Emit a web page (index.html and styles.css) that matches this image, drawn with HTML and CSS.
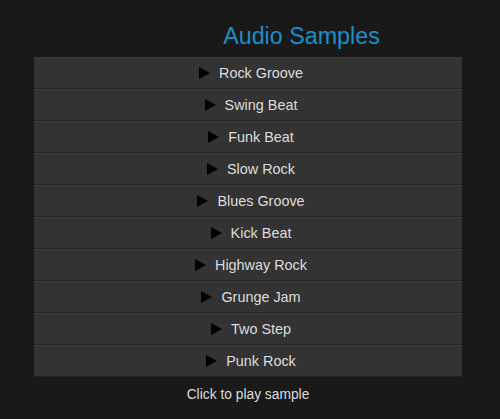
FILE: index.html
```html
<!DOCTYPE html>
<html>
<head>
<meta charset="utf-8">
<link rel="stylesheet" href="styles.css">
</head>
<body>
<div class="wrap">
  <h1 class="title">Audio Samples</h1>
  <ul class="list">
    <li class="row"><svg class="play" viewBox="0 0 11 12"><path d="M0 0L11 6L0 12Z"/></svg><span>Rock Groove</span></li>
    <li class="row"><svg class="play" viewBox="0 0 11 12"><path d="M0 0L11 6L0 12Z"/></svg><span>Swing Beat</span></li>
    <li class="row"><svg class="play" viewBox="0 0 11 12"><path d="M0 0L11 6L0 12Z"/></svg><span>Funk Beat</span></li>
    <li class="row"><svg class="play" viewBox="0 0 11 12"><path d="M0 0L11 6L0 12Z"/></svg><span>Slow Rock</span></li>
    <li class="row"><svg class="play" viewBox="0 0 11 12"><path d="M0 0L11 6L0 12Z"/></svg><span>Blues Groove</span></li>
    <li class="row"><svg class="play" viewBox="0 0 11 12"><path d="M0 0L11 6L0 12Z"/></svg><span>Kick Beat</span></li>
    <li class="row"><svg class="play" viewBox="0 0 11 12"><path d="M0 0L11 6L0 12Z"/></svg><span>Highway Rock</span></li>
    <li class="row"><svg class="play" viewBox="0 0 11 12"><path d="M0 0L11 6L0 12Z"/></svg><span>Grunge Jam</span></li>
    <li class="row"><svg class="play" viewBox="0 0 11 12"><path d="M0 0L11 6L0 12Z"/></svg><span>Two Step</span></li>
    <li class="row"><svg class="play" viewBox="0 0 11 12"><path d="M0 0L11 6L0 12Z"/></svg><span>Punk Rock</span></li>
  </ul>
  <p class="hint">Click to play sample</p>
</div>
</body>
</html>
```
FILE: styles.css
```css
html, body {
  margin: 0;
  padding: 0;
  background: #191919;
  height: 100%;
}
body {
  font-family: "Liberation Sans", Arial, sans-serif;
}
.wrap {
  width: 428px;
  margin: 0 0 0 34px;
  padding-top: 21px;
}
.title {
  margin: 0 0 6px 0;
  padding-left: 107px;
  text-align: center;
  font-weight: normal;
  font-size: 23.3px;
  line-height: 30px;
  color: #1b8fcb;
}
.list {
  list-style: none;
  margin: 0;
  padding: 0;
}
.row {
  display: flex;
  align-items: center;
  justify-content: center;
  height: 30px;
  padding-left: 6px;
  background: #333333;
  border-top: 1px solid #3a3a3a;
  border-bottom: 1px solid #222222;
  color: #dddddd;
  font-size: 14.4px;
}
.play {
  width: 11px;
  height: 12px;
  margin-right: 9px;
  fill: #000000;
}
.hint {
  margin: 10px 0 0 0;
  text-align: center;
  font-size: 13.8px;
  line-height: 16px;
  color: #dddddd;
}
```
